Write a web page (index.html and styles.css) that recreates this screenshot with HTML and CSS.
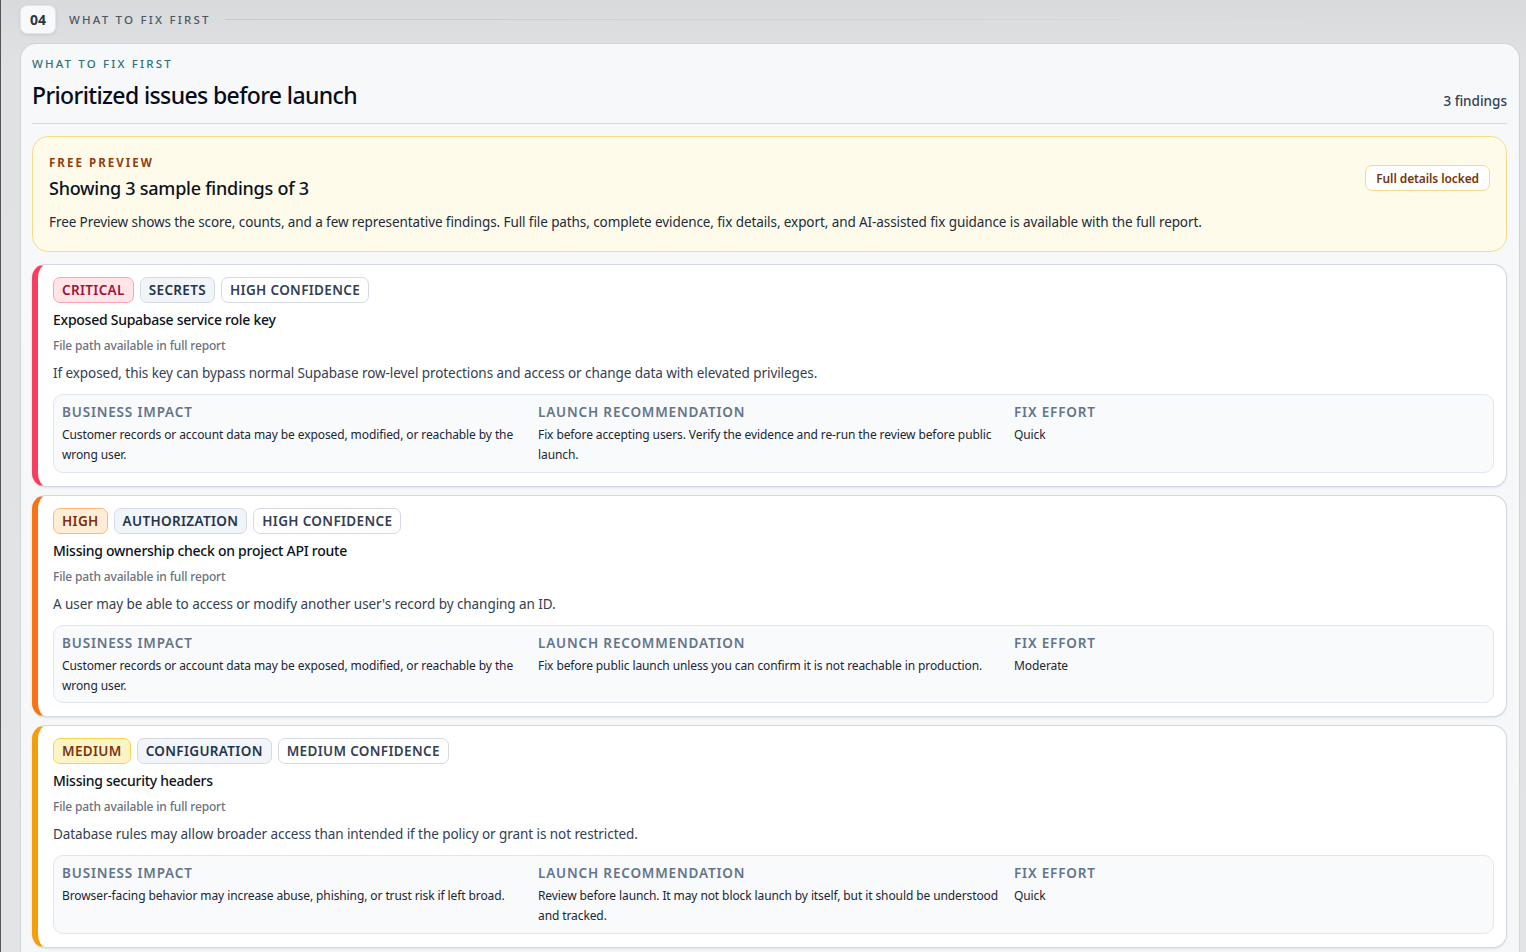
FILE: index.html
```html
<!DOCTYPE html>
<html lang="en">
<head>
<meta charset="utf-8">
<title>What to fix first</title>
<link rel="stylesheet" href="styles.css">
</head>
<body>
<div class="page">
  <div class="section-head">
    <span class="num">04</span>
    <span class="section-label">WHAT TO FIX FIRST</span>
    <span class="section-rule"></span>
  </div>
  <section class="panel">
    <div class="eyebrow">WHAT TO FIX FIRST</div>
    <header class="panel-head">
      <h2>Prioritized issues before launch</h2>
      <span class="count">3 findings</span>
    </header>
    <div class="banner">
      <div class="banner-main">
        <div class="banner-eyebrow">FREE PREVIEW</div>
        <h3>Showing 3 sample findings of 3</h3>
        <p>Free Preview shows the score, counts, and a few representative findings. Full file paths, complete evidence, fix details, export, and AI-assisted fix guidance is available with the full report.</p>
      </div>
      <span class="locked">Full details locked</span>
    </div>

    <article class="card critical">
      <div class="tags"><span class="tag sev">CRITICAL</span><span class="tag cat">SECRETS</span><span class="tag conf">HIGH CONFIDENCE</span></div>
      <h4>Exposed Supabase service role key</h4>
      <div class="path">File path available in full report</div>
      <p class="desc">If exposed, this key can bypass normal Supabase row-level protections and access or change data with elevated privileges.</p>
      <div class="facts">
        <div><div class="fact-label">BUSINESS IMPACT</div><div class="fact-text">Customer records or account data may be exposed, modified, or reachable by the wrong user.</div></div>
        <div><div class="fact-label">LAUNCH RECOMMENDATION</div><div class="fact-text">Fix before accepting users. Verify the evidence and re-run the review before public launch.</div></div>
        <div><div class="fact-label">FIX EFFORT</div><div class="fact-text">Quick</div></div>
      </div>
    </article>

    <article class="card high">
      <div class="tags"><span class="tag sev">HIGH</span><span class="tag cat">AUTHORIZATION</span><span class="tag conf">HIGH CONFIDENCE</span></div>
      <h4>Missing ownership check on project API route</h4>
      <div class="path">File path available in full report</div>
      <p class="desc">A user may be able to access or modify another user's record by changing an ID.</p>
      <div class="facts">
        <div><div class="fact-label">BUSINESS IMPACT</div><div class="fact-text">Customer records or account data may be exposed, modified, or reachable by the wrong user.</div></div>
        <div><div class="fact-label">LAUNCH RECOMMENDATION</div><div class="fact-text">Fix before public launch unless you can confirm it is not reachable in production.</div></div>
        <div><div class="fact-label">FIX EFFORT</div><div class="fact-text">Moderate</div></div>
      </div>
    </article>

    <article class="card medium">
      <div class="tags"><span class="tag sev">MEDIUM</span><span class="tag cat">CONFIGURATION</span><span class="tag conf">MEDIUM CONFIDENCE</span></div>
      <h4>Missing security headers</h4>
      <div class="path">File path available in full report</div>
      <p class="desc">Database rules may allow broader access than intended if the policy or grant is not restricted.</p>
      <div class="facts">
        <div><div class="fact-label">BUSINESS IMPACT</div><div class="fact-text">Browser-facing behavior may increase abuse, phishing, or trust risk if left broad.</div></div>
        <div><div class="fact-label">LAUNCH RECOMMENDATION</div><div class="fact-text">Review before launch. It may not block launch by itself, but it should be understood and tracked.</div></div>
        <div><div class="fact-label">FIX EFFORT</div><div class="fact-text">Quick</div></div>
      </div>
    </article>
  </section>
</div>
</body>
</html>
```
FILE: styles.css
```css
* { box-sizing: border-box; }
html, body { margin: 0; height: 100%; }
body {
  height: 952px;
  overflow: hidden;
  font-family: "Noto Sans", "Open Sans", sans-serif;
  color: #0b1220;
  background: linear-gradient(180deg, #d9dadc 0, #e0e1e3 60px, #e3e4e6 100%);
  border-left: 1px solid #555;
}
.page { padding: 5px 6px 0 19px; }
.section-head { display: flex; align-items: center; height: 29px; }
.num {
  width: 36px; height: 29px;
  display: flex; align-items: center; justify-content: center;
  background: #f8f9fb;
  border: 1px solid #e3e5ea;
  border-radius: 7px;
  box-shadow: 0 1px 3px rgba(40,50,70,.12);
  font-size: 14px; font-weight: 700; color: #2b3544;
}
.section-label {
  margin-left: 13px;
  font-size: 11.5px; letter-spacing: 2.2px; color: #4d5766; font-weight: 500;
}
.section-rule { flex: 1; height: 1px; margin: 0 0 0 14px; background: linear-gradient(90deg, #c6c9d0, rgba(198,201,208,0) 90%); }
.panel {
  margin-top: 9px;
  height: 920px;
  padding: 12px 12px 0 11px;
  background: linear-gradient(180deg, #f7f8fa, #f6f7f9);
  border: 1px solid #cfd3de;
  border-bottom: 0;
  border-radius: 16px 16px 0 0;
}
.eyebrow { font-size: 11.5px; font-weight: 500; letter-spacing: 2.15px; color: #2f7377; line-height: 16px; }
.panel-head {
  display: flex; justify-content: space-between; align-items: flex-end;
  padding-bottom: 12px; margin-top: 7px;
  border-bottom: 1px solid #d3d6df;
}
h2 { margin: 0; font-size: 23px; line-height: 32px; font-weight: 500; letter-spacing: -.62px; color: #070b18; }
.count { font-size: 13.5px; color: #344054; font-weight: 500; line-height: 18px; margin-bottom: 1px; }
.banner {
  margin-top: 12px;
  height: 116px;
  display: flex; justify-content: space-between; align-items: center;
  padding: 0 16px;
  background: #fffbeb;
  border: 1px solid #fcd98a;
  border-radius: 16px;
}
.banner-eyebrow { font-size: 11.5px; font-weight: 700; letter-spacing: 2.05px; color: #92400e; line-height: 16px; }
h3 { margin: 4px 0 0; font-size: 18px; line-height: 26px; font-weight: 500; letter-spacing: -.25px; color: #0b1220; }
.banner p { margin: 11px 0 2px; font-size: 13.5px; line-height: 20px; letter-spacing: -.09px; color: #222b3a; }
.locked {
  margin-top: -33px;
  height: 26px; padding: 1px 10px 0;
  display: flex; align-items: center;
  background: #fff;
  border: 1px solid #fcd98a;
  border-radius: 7px;
  font-size: 12px; font-weight: 600; letter-spacing: -.1px; color: #78350f;
}
.card {
  margin-top: 12px;
  padding: 12px 12px 13px 15px;
  background: #fff;
  border: 1px solid #d3d8e2;
  border-left: 6px solid;
  border-radius: 14px;
  box-shadow: 0 1px 2px rgba(60,80,120,.12);
}
.card + .card { margin-top: 8px; }
.critical { border-left-color: #f43f5e; }
.high { border-left-color: #f97316; }
.medium { border-left-color: #f59e0b; }
.tags { display: flex; gap: 6px; }
.tag {
  height: 26px; padding: 0 8px;
  display: flex; align-items: center;
  border: 1px solid #d5dae3;
  border-radius: 7px;
  font-size: 13.5px; font-weight: 600; letter-spacing: .34px;
  color: #344054;
}
.cat { background: #f1f5f9; color: #26344a; }
.conf { background: #fff; }
.critical .sev { background: #ffe4e8; border-color: #fda4b4; color: #9f1239; }
.high .sev { background: #ffedd5; border-color: #fdba74; color: #7c2d12; }
.medium .sev { background: #fef3c7; border-color: #fcd34d; color: #78350f; }
h4 { margin: 7px 0 0; font-size: 14px; line-height: 20px; font-weight: 500; letter-spacing: -.26px; color: #0b1220; }
.path { margin-top: 7px; font-size: 12px; line-height: 18px; font-weight: 500; letter-spacing: -.16px; color: #6b7280; }
.desc { margin: 8px 0 0; font-size: 13.5px; line-height: 20px; letter-spacing: -.07px; color: #344054; }
.facts {
  margin-top: 11px;
  height: 78.6px;
  display: grid; grid-template-columns: repeat(3, 1fr); column-gap: 5px;
  padding: 8px;
  background: #f8fafc;
  border: 1px solid #e2e6ee;
  border-radius: 10px;
}
.fact-label { font-size: 13.5px; font-weight: 600; letter-spacing: .83px; line-height: 18px; color: #64748b; }
.fact-text { margin-top: 4px; font-size: 12px; line-height: 20px; letter-spacing: -.1px; color: #1c2534; }
```
